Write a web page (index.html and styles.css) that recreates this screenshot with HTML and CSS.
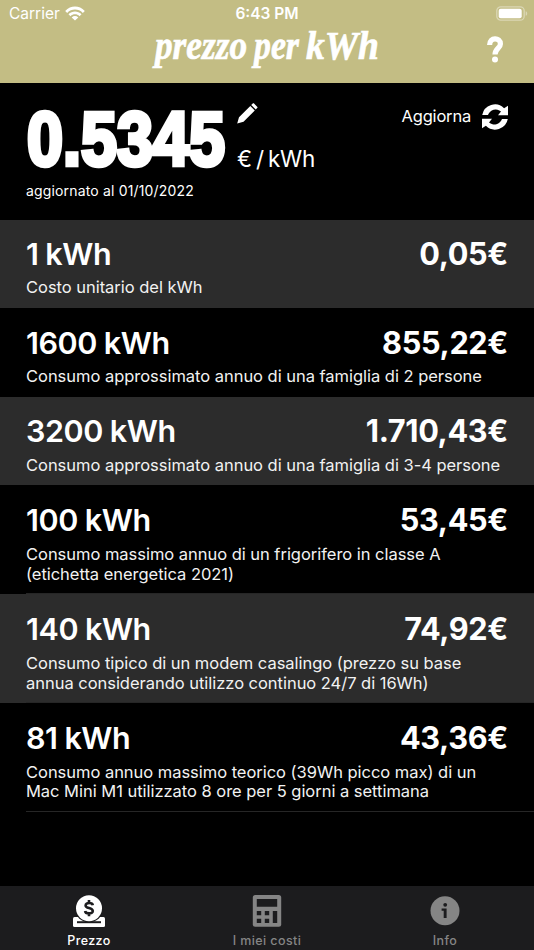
FILE: index.html
```html
<!DOCTYPE html>
<html lang="it">
<head>
<meta charset="utf-8">
<title>prezzo per kWh</title>
<link rel="stylesheet" href="styles.css">
</head>
<body>
<div class="app">
  <header class="nav">
    <div class="status">
      <div class="carrier"><span class="carrier-name">Carrier</span>
        <svg class="wifi" viewBox="0 0 20 15"><path d="M.2 4.9C5.8-.8 14.2-.8 19.8 4.9L17.8 6.9C13.4 2.5 6.6 2.5 2.2 6.9Z M3.5 8.2C7.2 4.5 12.8 4.5 16.5 8.2L14.5 10.2C12 7.7 8 7.7 5.5 10.2Z M6.7 11.4C8.6 9.6 11.4 9.6 13.3 11.4L10 14.6Z"/></svg>
      </div>
      <div class="clock"><span>6:43 PM</span></div>
      <div class="power"><svg class="battery" viewBox="0 0 32 15"><rect x=".8" y=".8" width="27.4" height="13.4" rx="4" class="battery-case"/><rect x="2.7" y="2.8" width="23" height="9.4" rx="2"/><path d="M29.7 5.2c2 .7 2 3.9 0 4.6z" class="battery-nub"/></svg></div>
    </div>
    <div class="titlebar">
      <svg class="title" viewBox="0 0 230 42" role="heading"><text y="28"><tspan x="3" textLength="92" lengthAdjust="spacingAndGlyphs">prezzo</tspan> <tspan x="102" textLength="45" lengthAdjust="spacingAndGlyphs">per</tspan> <tspan class="caps" x="154" textLength="73" lengthAdjust="spacingAndGlyphs">kWh</tspan></text></svg>
      <svg class="help" viewBox="0 0 16 27"><path d="M2.6 9C2.6 .6 13.4 1.2 13.4 7.9C13.4 12.5 8 12.2 8 18.6"/><circle cx="8" cy="23.6" r="3"/></svg>
    </div>
  </header>
  <section class="price">
    <div class="price-left">
      <div class="price-row">
        <svg class="amount" viewBox="0 0 200 66"><text x="1" y="55.5" textLength="198" lengthAdjust="spacingAndGlyphs">0.5345</text></svg>
        <div class="unit-col">
          <svg class="pencil" viewBox="0 0 21 21"><path d="M.2 20.5L2 14.2L13.3 2.9L17.8 7.4L6.5 18.7ZM14.2 2L16 .3Q16.4 0 16.8.3L20.4 3.9Q20.8 4.3 20.4 4.7L18.7 6.5Z"/></svg>
          <span class="unit">€ / kWh</span>
        </div>
      </div>
      <div class="updated"><span>aggiornato al 01/10/2022</span></div>
    </div>
    <div class="refresh"><span>Aggiorna</span>
      <svg class="refresh-icon" viewBox="0 0 26 26"><path id="arc" d="M.2 11A13 13 0 0 1 22.1 4.2L26 1.8V11.2H16L19 7.5A8.2 8.2 0 0 0 6 11Z"/><use href="#arc" transform="rotate(180 13 13)"/></svg>
    </div>
  </section>
  <main class="list">
    <article class="row shaded"><div class="line"><span class="kwh">1 kWh</span><span class="cost">0,05€</span></div><p><span>Costo unitario del kWh</span></p></article>
    <article class="row"><div class="line"><span class="kwh">1600 kWh</span><span class="cost">855,22€</span></div><p><span>Consumo approssimato annuo di una famiglia di 2 persone</span></p></article>
    <article class="row shaded"><div class="line"><span class="kwh">3200 kWh</span><span class="cost">1.710,43€</span></div><p><span>Consumo approssimato annuo di una famiglia di 3-4 persone</span></p></article>
    <article class="row tall"><div class="line"><span class="kwh">100 kWh</span><span class="cost">53,45€</span></div><p><span>Consumo massimo annuo di un frigorifero in classe A</span><br><span>(etichetta energetica 2021)</span></p></article>
    <article class="row shaded tall"><div class="line"><span class="kwh">140 kWh</span><span class="cost">74,92€</span></div><p><span>Consumo tipico di un modem casalingo (prezzo su base</span><br><span>annua considerando utilizzo continuo 24/7 di 16Wh)</span></p></article>
    <article class="row tall"><div class="line"><span class="kwh">81 kWh</span><span class="cost">43,36€</span></div><p><span>Consumo annuo massimo teorico (39Wh picco max) di un</span><br><span>Mac Mini M1 utilizzato 8 ore per 5 giorni a settimana</span></p></article>
  </main>
  <nav class="tabs">
    <div class="tab active">
      <svg class="tab-icon" viewBox="0 0 32 32"><path d="M1.5 22H30.5Q32 22 32 23.5V30.5Q32 32 30.5 32H1.5Q0 32 0 30.5V23.5Q0 22 1.5 22Z"/><path class="cut" d="M4 26.2H28V28.2H4Z"/><circle cx="16" cy="13.2" r="14.2" class="cut"/><circle cx="16" cy="13.2" r="13"/><path d="M19.8 10.2C19.4 7.4 12.6 7.2 12.6 10.4C12.6 13.8 19.8 12.1 19.8 16C19.8 19.3 12.4 19.1 12.1 16M16 5v3M16 18.2v3" class="dollar"/></svg>
      <span>Prezzo</span>
    </div>
    <div class="tab">
      <svg class="tab-icon" viewBox="0 0 32 32"><rect x="1.8" y="0" width="28.4" height="31.8" rx="2.5"/><path class="cut" d="M5.8 4H26.2V11.7H5.8ZM5.8 16H10.2V20.2H5.8ZM13.8 16H18.2V20.2H13.8ZM5.8 23.8H10.2V28H5.8ZM13.8 23.8H18.2V28H13.8ZM21.8 16H26.2V28H21.8Z"/></svg>
      <span>I miei costi</span>
    </div>
    <div class="tab">
      <svg class="tab-icon" viewBox="0 0 32 32"><circle cx="16" cy="15.8" r="14.5"/><path class="cut" d="M12.6 13.4H17.6V23H14.7V15.8H12.6Z"/><circle cx="16.2" cy="9.8" r="1.9" class="cut"/></svg>
      <span>Info</span>
    </div>
  </nav>
</div>
</body>
</html>
```
FILE: styles.css
```css
* { box-sizing: border-box; }
body { margin: 0; background: #000; color: #fff; font-family: Inter, sans-serif; }
svg { display: block; fill: currentColor; }
.app { width: 534px; height: 950px; display: flex; flex-direction: column; overflow: hidden; }
.nav { height: 82.5px; background: #c3bd84; flex: none; }
.status { height: 26px; display: grid; grid-template-columns: 1fr auto 1fr; font-size: 15.5px; line-height: 28px; }
.carrier { display: flex; gap: 5px; padding-left: 9px; }
.wifi { width: 20px; height: 15px; margin-top: 5.5px; }
.clock { font-weight: 600; }
.power { display: flex; justify-content: flex-end; padding: 5.5px 6.5px 0 0; }
.battery { width: 32px; height: 15px; }
.battery-case { fill: none; stroke: #fff; stroke-opacity: .4; stroke-width: 1.3; }
.battery-nub { opacity: .4; }
.titlebar { display: grid; grid-template-columns: 1fr 230px 1fr; padding-top: 5px; }
.title { grid-column: 2; width: 230px; height: 42px; overflow: visible; }
.title text { font: italic bold 42px "Liberation Serif", serif; stroke: #fff; stroke-width: .7px; }
.title .caps { font-size: 39px; }
.help { width: 16px; height: 27px; margin-top: 5px; justify-self: end; margin-right: 31px; }
.help path { fill: none; stroke: #fff; stroke-width: 5.2; }
.price { height: 137.2px; flex: none; display: flex; justify-content: space-between; padding: 20px 26px 0; }
.price-row { display: flex; gap: 11px; height: 66px; }
.amount { width: 200px; height: 66px; margin-top: 6px; overflow: visible; }
.amount text { font: bold 76px "Liberation Sans Narrow", "Liberation Sans", sans-serif; stroke: #fff; stroke-width: 4.6px; }
.pencil { width: 21px; height: 21px; margin-top: .5px; }
.unit { display: block; font-size: 22.5px; line-height: 28px; margin-top: 20.5px; letter-spacing: -.3px; word-spacing: -1.8px; }
.updated { font-size: 14px; line-height: 20px; margin-top: 12px; letter-spacing: .16px; }
.refresh { display: flex; gap: 11px; font-size: 16.5px; line-height: 27px; letter-spacing: -.2px; }
.refresh-icon { width: 26px; height: 26px; margin-top: 1px; }
.row { height: 88.6px; padding: 15.5px 26px 0; }
.row.tall { height: 108.8px; background-image: linear-gradient(90deg, transparent 26px, #262626 26px); background-size: 100% 1px; background-repeat: no-repeat; background-position: bottom; }
.shaded { background-color: #2c2c2c; }
.line { display: flex; justify-content: space-between; font-size: 31px; line-height: 37px; }
.kwh { font-weight: 600; font-size: 30.5px; letter-spacing: -.4px; word-spacing: -.5px; }
.cost { font-weight: 700; font-size: 30.7px; letter-spacing: -.35px; }
.row p { margin: 6.3px 0 0; font-size: 16.5px; line-height: 19.8px; white-space: nowrap; letter-spacing: -.03px; color: #f2f2f2; }
.row.tall p { margin-top: 7px; }
.tabs { height: 64px; margin-top: auto; background: #1c1c1e; display: grid; grid-template-columns: repeat(3, 1fr); }
.tab { display: flex; flex-direction: column; align-items: center; color: #858585; font-size: 12.5px; font-weight: 500; line-height: 16px; letter-spacing: .4px; padding-top: 9px; gap: 6px; }
.tab.active { color: #fff; }
.tab-icon { width: 32px; height: 32px; }
.cut { fill: #1c1c1e; }
.dollar { fill: none; stroke: #1c1c1e; stroke-width: 2.6; }
```
